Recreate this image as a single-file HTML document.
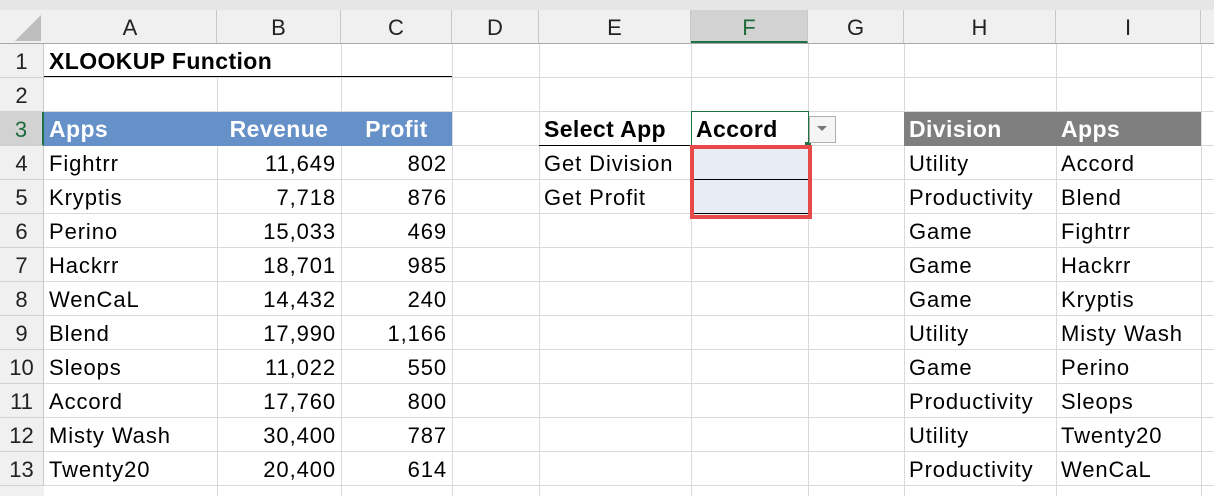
<!DOCTYPE html>
<html><head><meta charset="utf-8"><style>
*{margin:0;padding:0;box-sizing:border-box}
body{width:1214px;height:496px;overflow:hidden;background:#fff;position:relative;font-family:"Liberation Sans",sans-serif;font-size:22px;letter-spacing:0.9px;color:#000}
div{position:absolute}
.h{background:#d9d9d9}
.v{background:#d9d9d9}
.t{height:34px;line-height:35px;padding:0 5px;white-space:nowrap}
.r{text-align:right}
.c{text-align:center}
.b{font-weight:bold;font-size:23px;letter-spacing:0.4px}
.w{color:#fff;font-weight:bold;font-size:23px;letter-spacing:0.4px}
.ch{top:10px;height:33px;line-height:36px;text-align:center;font-size:22px;letter-spacing:0;color:#222;border-right:1px solid #c8c8c8}
.rh{left:0;width:44px;height:34px;line-height:36px;text-align:center;font-size:22px;letter-spacing:0;color:#222;background:#f0f0f0;border-bottom:1px solid #d0d0d0;border-right:1px solid #c8c8c8}
</style></head><body>
<div style="left:0;top:0;width:1214px;height:10px;background:#e6e6e6"></div>
<div style="left:0;top:10px;width:1214px;height:34px;background:#f0f0f0;border-bottom:1px solid #a8a8a8"></div>
<div style="left:0;top:44px;width:44px;height:452px;background:#f0f0f0"></div>
<svg style="position:absolute;left:14px;top:14px" width="28" height="28"><polygon points="27,1 27,27 1,27" fill="#bdbdbd"/></svg>
<div class="h" style="left:44px;top:77px;width:1170px;height:1px"></div>
<div class="h" style="left:44px;top:111px;width:1170px;height:1px"></div>
<div class="h" style="left:44px;top:145px;width:1170px;height:1px"></div>
<div class="h" style="left:44px;top:179px;width:1170px;height:1px"></div>
<div class="h" style="left:44px;top:213px;width:1170px;height:1px"></div>
<div class="h" style="left:44px;top:247px;width:1170px;height:1px"></div>
<div class="h" style="left:44px;top:281px;width:1170px;height:1px"></div>
<div class="h" style="left:44px;top:315px;width:1170px;height:1px"></div>
<div class="h" style="left:44px;top:349px;width:1170px;height:1px"></div>
<div class="h" style="left:44px;top:383px;width:1170px;height:1px"></div>
<div class="h" style="left:44px;top:417px;width:1170px;height:1px"></div>
<div class="h" style="left:44px;top:451px;width:1170px;height:1px"></div>
<div class="h" style="left:44px;top:485px;width:1170px;height:1px"></div>
<div class="v" style="left:217px;top:44px;width:1px;height:452px"></div>
<div class="v" style="left:341px;top:44px;width:1px;height:452px"></div>
<div class="v" style="left:452px;top:44px;width:1px;height:452px"></div>
<div class="v" style="left:539px;top:44px;width:1px;height:452px"></div>
<div class="v" style="left:691px;top:44px;width:1px;height:452px"></div>
<div class="v" style="left:808px;top:44px;width:1px;height:452px"></div>
<div class="v" style="left:904px;top:44px;width:1px;height:452px"></div>
<div class="v" style="left:1056px;top:44px;width:1px;height:452px"></div>
<div class="v" style="left:1201px;top:44px;width:1px;height:452px"></div>
<div class="ch" style="left:44px;width:173px">A</div>
<div class="ch" style="left:217px;width:124px">B</div>
<div class="ch" style="left:341px;width:111px">C</div>
<div class="ch" style="left:452px;width:87px">D</div>
<div class="ch" style="left:539px;width:152px">E</div>
<div class="ch" style="left:691px;width:117px;background:#d2d2d2;color:#1e6b3c;border-bottom:2px solid #1e7145">F</div>
<div class="ch" style="left:808px;width:96px">G</div>
<div class="ch" style="left:904px;width:152px">H</div>
<div class="ch" style="left:1056px;width:145px">I</div>
<div class="rh" style="top:44px">1</div>
<div class="rh" style="top:78px">2</div>
<div class="rh" style="top:112px;background:#d2d2d2;color:#1e6b3c;border-right:2px solid #1e7145">3</div>
<div class="rh" style="top:146px">4</div>
<div class="rh" style="top:180px">5</div>
<div class="rh" style="top:214px">6</div>
<div class="rh" style="top:248px">7</div>
<div class="rh" style="top:282px">8</div>
<div class="rh" style="top:316px">9</div>
<div class="rh" style="top:350px">10</div>
<div class="rh" style="top:384px">11</div>
<div class="rh" style="top:418px">12</div>
<div class="rh" style="top:452px">13</div>
<div style="left:45px;top:44px;width:296px;height:33px;background:#fff"></div>
<div class="t b" style="left:44px;top:44px">XLOOKUP Function</div>
<div style="left:44px;top:76px;width:408px;height:1px;background:#000"></div>
<div style="left:44px;top:112px;width:408px;height:34px;background:#6690c8"></div>
<div class="t w" style="left:44px;top:112px">Apps</div>
<div class="t w c" style="left:217px;top:112px;width:124px">Revenue</div>
<div class="t w c" style="left:341px;top:112px;width:111px">Profit</div>
<div style="left:904px;top:112px;width:297px;height:34px;background:#7f7f7f"></div>
<div class="t w" style="left:904px;top:112px">Division</div>
<div class="t w" style="left:1056px;top:112px">Apps</div>
<div class="t b" style="left:539px;top:112px">Select App</div>
<div style="left:539px;top:145px;width:152px;height:1px;background:#000"></div>
<div style="left:691px;top:111px;width:118px;height:35px;border:1px solid #1e7145;background:#fff"></div>
<div class="t b" style="left:691px;top:112px">Accord</div>
<div style="left:805px;top:142px;width:6px;height:6px;background:#1e7145"></div>
<div style="left:809px;top:116px;width:27px;height:27px;border:1px solid #b0b0b0;background:#f5f5f5"></div>
<svg style="position:absolute;left:817px;top:126px" width="11" height="6"><polygon points="0,0 10,0 5,5" fill="#777"/></svg>
<div class="t" style="left:539px;top:146px">Get Division</div>
<div class="t" style="left:539px;top:180px">Get Profit</div>
<div style="left:690px;top:145px;width:122px;height:74px;border:4px solid #e84a4a;background:#e8ecf5"></div>
<div style="left:694px;top:179px;width:114px;height:1px;background:#000"></div>
<div style="left:694px;top:213px;width:114px;height:1px;background:#000"></div>
<div class="t" style="left:44px;top:146px">Fightrr</div><div class="t r" style="left:217px;top:146px;width:124px">11,649</div><div class="t r" style="left:341px;top:146px;width:111px">802</div>
<div class="t" style="left:44px;top:180px">Kryptis</div><div class="t r" style="left:217px;top:180px;width:124px">7,718</div><div class="t r" style="left:341px;top:180px;width:111px">876</div>
<div class="t" style="left:44px;top:214px">Perino</div><div class="t r" style="left:217px;top:214px;width:124px">15,033</div><div class="t r" style="left:341px;top:214px;width:111px">469</div>
<div class="t" style="left:44px;top:248px">Hackrr</div><div class="t r" style="left:217px;top:248px;width:124px">18,701</div><div class="t r" style="left:341px;top:248px;width:111px">985</div>
<div class="t" style="left:44px;top:282px">WenCaL</div><div class="t r" style="left:217px;top:282px;width:124px">14,432</div><div class="t r" style="left:341px;top:282px;width:111px">240</div>
<div class="t" style="left:44px;top:316px">Blend</div><div class="t r" style="left:217px;top:316px;width:124px">17,990</div><div class="t r" style="left:341px;top:316px;width:111px">1,166</div>
<div class="t" style="left:44px;top:350px">Sleops</div><div class="t r" style="left:217px;top:350px;width:124px">11,022</div><div class="t r" style="left:341px;top:350px;width:111px">550</div>
<div class="t" style="left:44px;top:384px">Accord</div><div class="t r" style="left:217px;top:384px;width:124px">17,760</div><div class="t r" style="left:341px;top:384px;width:111px">800</div>
<div class="t" style="left:44px;top:418px">Misty Wash</div><div class="t r" style="left:217px;top:418px;width:124px">30,400</div><div class="t r" style="left:341px;top:418px;width:111px">787</div>
<div class="t" style="left:44px;top:452px">Twenty20</div><div class="t r" style="left:217px;top:452px;width:124px">20,400</div><div class="t r" style="left:341px;top:452px;width:111px">614</div>
<div class="t" style="left:904px;top:146px">Utility</div><div class="t" style="left:1056px;top:146px">Accord</div>
<div class="t" style="left:904px;top:180px">Productivity</div><div class="t" style="left:1056px;top:180px">Blend</div>
<div class="t" style="left:904px;top:214px">Game</div><div class="t" style="left:1056px;top:214px">Fightrr</div>
<div class="t" style="left:904px;top:248px">Game</div><div class="t" style="left:1056px;top:248px">Hackrr</div>
<div class="t" style="left:904px;top:282px">Game</div><div class="t" style="left:1056px;top:282px">Kryptis</div>
<div class="t" style="left:904px;top:316px">Utility</div><div class="t" style="left:1056px;top:316px">Misty Wash</div>
<div class="t" style="left:904px;top:350px">Game</div><div class="t" style="left:1056px;top:350px">Perino</div>
<div class="t" style="left:904px;top:384px">Productivity</div><div class="t" style="left:1056px;top:384px">Sleops</div>
<div class="t" style="left:904px;top:418px">Utility</div><div class="t" style="left:1056px;top:418px">Twenty20</div>
<div class="t" style="left:904px;top:452px">Productivity</div><div class="t" style="left:1056px;top:452px">WenCaL</div>
</body></html>
